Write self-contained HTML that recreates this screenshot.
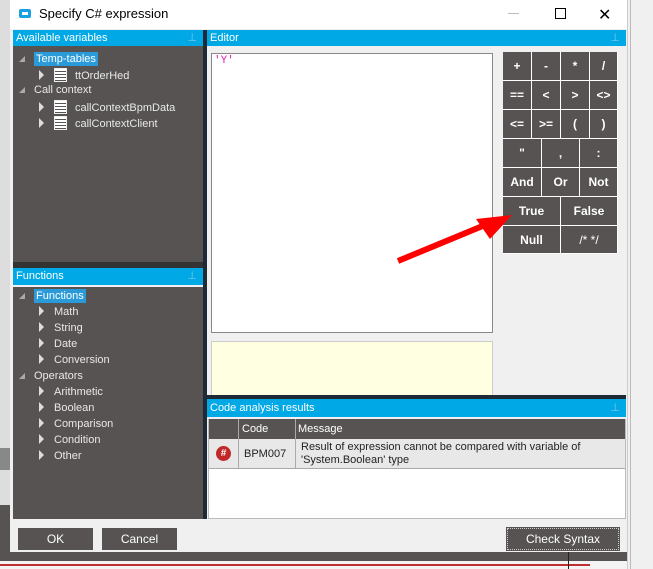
<!DOCTYPE html>
<html><head><meta charset="utf-8"><style>
*{box-sizing:border-box;margin:0;padding:0}
body{width:653px;height:569px;overflow:hidden;background:#e9e9e9;font-family:"Liberation Sans",sans-serif;position:relative}
.a{position:absolute}
.hdr{background:#00a8e6;color:#fff;font-size:11px;padding-left:3px;line-height:16px}
.dk{background:#575352}
.tree div{position:absolute;color:#e8e8e8;font-size:11px;white-space:nowrap}
.btn{position:absolute;background:#575352;color:#fff;font-size:12px;font-weight:bold;display:flex;align-items:center;justify-content:center;border-right:1px solid #fff;border-bottom:1px solid #fff}
.tri{display:inline-block;width:0;height:0;border-left:5px solid #ddd;border-top:5px solid transparent;border-bottom:5px solid transparent;margin-right:10px;vertical-align:-1px}
.dn{display:inline-block;width:0;height:0;border-left:6px solid transparent;border-bottom:6px solid #aaa;margin-right:9px}
.ic{display:inline-block;width:13px;height:14px;background:repeating-linear-gradient(#fff 0 2px,#555 2px 3px);border:1px solid #eee;margin-right:8px;vertical-align:-3px}
</style></head><body>
<div class="a" style="left:0;top:0;width:10px;height:569px;background:#ddd"></div>
<div class="a" style="left:0;top:448px;width:10px;height:22px;background:#888"></div>
<div class="a" style="left:0;top:505px;width:10px;height:48px;background:#575352"></div>
<div class="a" style="left:627px;top:0;width:26px;height:569px;background:#f0f0f0;border-left:1px solid #ccc"></div>
<div class="a" style="left:630px;top:0;width:1px;height:569px;background:#bbb"></div>
<div class="a" style="left:0;top:552px;width:627px;height:17px;background:#575352"></div>
<div class="a" style="left:0;top:561px;width:627px;height:8px;background:#f4f4f4"></div>
<div class="a" style="left:0;top:564px;width:590px;height:2px;background:#c03030"></div>
<div class="a" style="left:568px;top:552px;width:1px;height:17px;background:#222"></div>
<div class="a" style="left:10px;top:0;width:617px;height:552px;background:#f0f0f0"></div>
<div class="a" style="left:10px;top:0;width:617px;height:29px;background:#fff"></div>
<div class="a" style="left:19px;top:9px;width:12px;height:9px;background:#1ba1e2;border-radius:2px"></div>
<div class="a" style="left:22px;top:12px;width:6px;height:3px;background:#fff"></div>
<div class="a" style="left:39px;top:6px;font-size:13px;color:#000">Specify C# expression</div>
<div class="a" style="left:508px;top:13px;width:11px;height:1px;background:#bbb"></div>
<div class="a" style="left:555px;top:8px;width:11px;height:11px;border:1px solid #000"></div>
<div class="a" style="left:598px;top:5px;font-size:16px;color:#000">✕</div>
<div class="a hdr" style="left:13px;top:30px;width:190px;height:16px">Available variables<span style="float:right;margin-right:6px;color:#7cc8e8">⊥</span></div>
<div class="a dk tree" style="left:13px;top:46px;width:190px;height:216px">
<div style="left:6px;top:7px"><span class="dn"></span><span style="background:#2a9bd8;color:#fff;padding:1px 2px">Temp-tables</span></div>
<div style="left:26px;top:22px"><span class="tri"></span><span class="ic"></span>ttOrderHed</div>
<div style="left:6px;top:38px"><span class="dn"></span>Call context</div>
<div style="left:26px;top:54px"><span class="tri"></span><span class="ic"></span>callContextBpmData</div>
<div style="left:26px;top:70px"><span class="tri"></span><span class="ic"></span>callContextClient</div>
</div>
<div class="a" style="left:13px;top:262px;width:190px;height:6px;background:#333"></div>
<div class="a hdr" style="left:13px;top:268px;width:190px;height:17px">Functions<span style="float:right;margin-right:6px;color:#7cc8e8">⊥</span></div>
<div class="a dk tree" style="left:13px;top:287px;width:190px;height:232px">
<div style="left:6px;top:3px"><span class="dn"></span><span style="background:#2a9bd8;color:#fff;padding:1px 2px">Functions</span></div>
<div style="left:26px;top:19px"><span class="tri"></span>Math</div>
<div style="left:26px;top:35px"><span class="tri"></span>String</div>
<div style="left:26px;top:51px"><span class="tri"></span>Date</div>
<div style="left:26px;top:67px"><span class="tri"></span>Conversion</div>
<div style="left:6px;top:83px"><span class="dn"></span>Operators</div>
<div style="left:26px;top:99px"><span class="tri"></span>Arithmetic</div>
<div style="left:26px;top:115px"><span class="tri"></span>Boolean</div>
<div style="left:26px;top:131px"><span class="tri"></span>Comparison</div>
<div style="left:26px;top:147px"><span class="tri"></span>Condition</div>
<div style="left:26px;top:163px"><span class="tri"></span>Other</div>
</div>
<div class="a" style="left:203px;top:30px;width:4px;height:489px;background:#1e2a36"></div>
<div class="a hdr" style="left:207px;top:30px;width:419px;height:16px">Editor<span style="float:right;margin-right:6px;color:#7cc8e8">⊥</span></div>
<div class="a" style="left:211px;top:53px;width:282px;height:280px;background:#fff;border:1px solid #888"></div>
<div class="a" style="left:214px;top:55px;font-size:11px;color:#e020c0;font-family:'Liberation Mono',monospace">'Y'</div>
<div class="a" style="left:211px;top:341px;width:282px;height:56px;background:#ffffe1;border:1px solid #ccc"></div>
<div class="a" style="left:503px;top:52px;width:115px;height:202px;background:#575352"></div>
<div class="btn" style="left:503px;top:52px;width:29px;height:29px">+</div>
<div class="btn" style="left:532px;top:52px;width:29px;height:29px">-</div>
<div class="btn" style="left:561px;top:52px;width:29px;height:29px">*</div>
<div class="btn" style="left:590px;top:52px;width:28px;height:29px">/</div>
<div class="btn" style="left:503px;top:81px;width:29px;height:29px">==</div>
<div class="btn" style="left:532px;top:81px;width:29px;height:29px">&lt;</div>
<div class="btn" style="left:561px;top:81px;width:29px;height:29px">&gt;</div>
<div class="btn" style="left:590px;top:81px;width:28px;height:29px">&lt;&gt;</div>
<div class="btn" style="left:503px;top:110px;width:29px;height:29px">&lt;=</div>
<div class="btn" style="left:532px;top:110px;width:29px;height:29px">&gt;=</div>
<div class="btn" style="left:561px;top:110px;width:29px;height:29px">(</div>
<div class="btn" style="left:590px;top:110px;width:28px;height:29px">)</div>
<div class="btn" style="left:503px;top:139px;width:39px;height:29px">"</div>
<div class="btn" style="left:542px;top:139px;width:38px;height:29px">,</div>
<div class="btn" style="left:580px;top:139px;width:38px;height:29px">:</div>
<div class="btn" style="left:503px;top:168px;width:39px;height:29px">And</div>
<div class="btn" style="left:542px;top:168px;width:38px;height:29px">Or</div>
<div class="btn" style="left:580px;top:168px;width:38px;height:29px">Not</div>
<div class="btn" style="left:503px;top:197px;width:58px;height:29px">True</div>
<div class="btn" style="left:561px;top:197px;width:57px;height:29px">False</div>
<div class="btn" style="left:503px;top:226px;width:58px;height:28px">Null</div>
<div class="btn" style="left:561px;top:226px;width:57px;height:28px;font-weight:normal">/* */</div>
<div class="a" style="left:207px;top:395px;width:419px;height:4px;background:#1e2a36"></div>
<div class="a hdr" style="left:207px;top:399px;width:419px;height:18px;line-height:18px">Code analysis results<span style="float:right;margin-right:6px;color:#7cc8e8">⊥</span></div>
<div class="a" style="left:208px;top:419px;width:418px;height:100px;background:#fff;border:1px solid #bbb"></div>
<div class="a dk" style="left:209px;top:419px;width:416px;height:20px"></div>
<div class="a" style="left:238px;top:419px;width:1px;height:50px;background:#aaa"></div>
<div class="a" style="left:295px;top:419px;width:1px;height:50px;background:#aaa"></div>
<div class="a" style="left:242px;top:423px;font-size:11px;color:#fff">Code</div>
<div class="a" style="left:298px;top:423px;font-size:11px;color:#fff">Message</div>
<div class="a" style="left:209px;top:439px;width:416px;height:30px;background:#e8e8e8;border-bottom:1px solid #aaa"></div>
<div class="a" style="left:238px;top:439px;width:1px;height:30px;background:#aaa"></div>
<div class="a" style="left:295px;top:439px;width:1px;height:30px;background:#aaa"></div>
<div class="a" style="left:216px;top:446px;width:15px;height:15px;border-radius:50%;background:#c0282a;color:#fff;font-size:10px;font-weight:bold;text-align:center;line-height:15px">#</div>
<div class="a" style="left:244px;top:448px;font-size:11px;color:#222">BPM007</div>
<div class="a" style="left:301px;top:441px;font-size:11px;color:#222;line-height:13px">Result of expression cannot be compared with variable of<br>'System.Boolean' type</div>
<div class="a dk" style="left:18px;top:528px;width:75px;height:22px;color:#fff;font-size:12px;text-align:center;line-height:22px">OK</div>
<div class="a dk" style="left:102px;top:528px;width:75px;height:22px;color:#fff;font-size:12px;text-align:center;line-height:22px">Cancel</div>
<div class="a dk" style="left:507px;top:528px;width:112px;height:22px;color:#fff;font-size:12px;text-align:center;line-height:20px;border:1px dotted #ccc;outline:1px solid #575352">Check Syntax</div>
<svg class="a" style="left:0;top:0" width="653" height="569"><line x1="398" y1="261" x2="485" y2="225" stroke="#f00" stroke-width="6"/><polygon points="512,215 476,219 490,239" fill="#f00"/></svg>
</body></html>
